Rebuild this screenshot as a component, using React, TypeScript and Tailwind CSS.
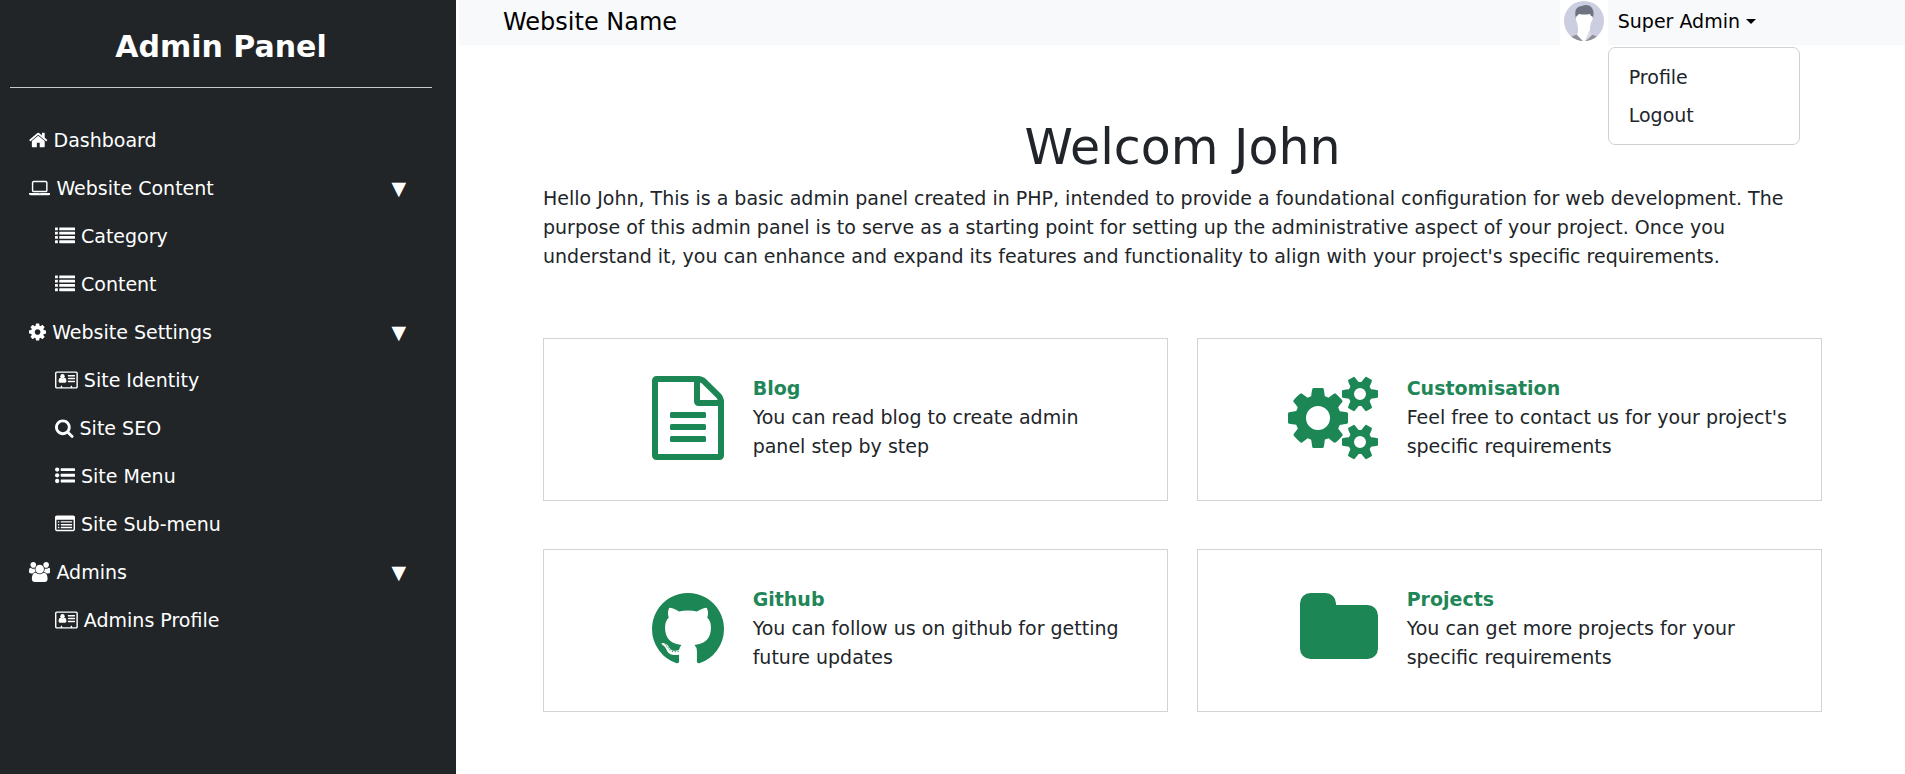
import React, { useState } from "react";

type IconProps = { className: string };

function Glyph({ viewBox, className, children }: { viewBox: string; className: string; children: React.ReactNode }) {
  return (
    <svg viewBox={viewBox} className={`${className} w-auto shrink-0`} fill="currentColor" aria-hidden="true">
      {children}
    </svg>
  );
}

function HomeIcon({ className }: IconProps) {
  return (
    <Glyph viewBox="64 0 1664 1792" className={className}>
      <path d="M1472 992v480q0 26-19 45t-45 19h-384v-384h-256v384h-384q-26 0-45-19t-19-45v-480q0-1 .5-3t.5-3l575-474 575 474q1 2 1 6zm223-69l-62 74q-8 9-21 11h-3q-13 0-21-7l-692-577-692 577q-12 8-24 7-13-2-21-11l-62-74q-8-10-7-23.5t11-21.5l719-599q32-26 76-26t76 26l244 204v-195q0-14 9-23t23-9h192q14 0 23 9t9 23v408l219 182q10 8 11 21.5t-7 23.5z" />
    </Glyph>
  );
}

function LaptopIcon({ className }: IconProps) {
  return (
    <Glyph viewBox="0 0 1920 1792" className={className}>
      <path d="M416 1280q-66 0-113-47t-47-113v-704q0-66 47-113t113-47h1088q66 0 113 47t47 113v704q0 66-47 113t-113 47h-1088zm-32-864v704q0 13 9.5 22.5t22.5 9.5h1088q13 0 22.5-9.5t9.5-22.5v-704q0-13-9.5-22.5t-22.5-9.5h-1088q-13 0-22.5 9.5t-9.5 22.5zm1376 928h160v96q0 40-47 68t-113 28h-1600q-66 0-113-28t-47-68v-96h1760zm-720 96q16 0 16-16t-16-16h-160q-16 0-16 16t16 16h160z" />
    </Glyph>
  );
}

function ListIcon({ className }: IconProps) {
  return (
    <Glyph viewBox="0 0 1792 1792" className={className}>
      {[128, 512, 896, 1280].map((y) => (
        <g key={y}>
          <rect x="0" y={y} width="256" height="256" rx="32" />
          <rect x="384" y={y} width="1408" height="256" rx="32" />
        </g>
      ))}
    </Glyph>
  );
}

function CogIcon({ className }: IconProps) {
  return (
    <Glyph viewBox="128 0 1536 1792" className={className}>
      <path d="M1152 896q0-106-75-181t-181-75-181 75-75 181 75 181 181 75 181-75 75-181zm512-109v222q0 12-8 23t-20 13l-185 28q-19 54-39 91 35 50 107 138 10 12 10 25t-9 23q-27 37-99 108t-94 71q-12 0-26-9l-138-108q-44 23-91 38-16 136-29 186-7 28-36 28h-222q-14 0-24.5-8.5t-11.5-21.5l-28-184q-49-16-90-37l-141 107q-10 9-25 9-14 0-25-11-126-114-165-168-7-10-7-23 0-12 8-23 15-21 51-66.5t54-70.5q-27-50-41-99l-183-27q-13-2-21-12.5t-8-23.5v-222q0-12 8-23t19-13l186-28q14-46 39-92-40-57-107-138-10-12-10-24 0-10 9-23 26-36 98.5-107.5t94.5-71.5q13 0 26 10l138 107q44-23 91-38 16-136 29-186 7-28 36-28h222q14 0 24.5 8.5t11.5 21.5l28 184q49 16 90 37l142-107q9-9 24-9 13 0 25 10 129 119 165 170 7 8 7 22 0 12-8 23-15 21-51 66.5t-54 70.5q26 50 41 98l183 28q13 2 21 12.5t8 23.5z" />
    </Glyph>
  );
}

function CardIcon({ className }: IconProps) {
  return (
    <Glyph viewBox="0 0 2048 1792" className={className}>
      <path d="M1024 1003q0 59-34 98t-84 39h-468q-50 0-84-39t-34-98q0-140 43-223t141-83q90 72 168 72t168-72q98 0 141 83t43 223z" />
      <circle cx="672" cy="560" r="196" />
      <rect x="1152" y="448" width="640" height="128" rx="32" />
      <rect x="1152" y="704" width="640" height="128" rx="32" />
      <rect x="1152" y="960" width="640" height="128" rx="32" />
      <path
        fillRule="evenodd"
        d="M160 128h1728q66 0 113 47t47 113v1216q0 66-47 113t-113 47h-1728q-66 0-113-47t-47-113v-1216q0-66 47-113t113-47zM160 256q-32 0-32 32v1216q0 32 32 32h352v-96q0-32 32-32h64q32 0 32 32v96h768v-96q0-32 32-32h64q32 0 32 32v96h352q32 0 32-32v-1216q0-32-32-32z"
      />
    </Glyph>
  );
}

function SearchIcon({ className }: IconProps) {
  return (
    <Glyph viewBox="64 0 1664 1792" className={className}>
      <path d="M1216 832q0-185-131.5-316.5t-316.5-131.5-316.5 131.5-131.5 316.5 131.5 316.5 316.5 131.5 316.5-131.5 131.5-316.5zm512 832q0 52-38 90t-90 38q-54 0-90-38l-343-342q-179 124-399 124-143 0-273.5-55.5t-225-150-150-225-55.5-273.5 55.5-273.5 150-225 225-150 273.5-55.5 273.5 55.5 225 150 150 225 55.5 273.5q0 220-124 399l343 343q37 37 37 90z" />
    </Glyph>
  );
}

function BulletsIcon({ className }: IconProps) {
  return (
    <Glyph viewBox="0 0 1792 1792" className={className}>
      {[320, 832, 1344].map((cy) => (
        <g key={cy}>
          <circle cx="192" cy={cy} r="192" />
          <rect x="512" y={cy - 128} width="1280" height="256" rx="32" />
        </g>
      ))}
    </Glyph>
  );
}

function ListPanelIcon({ className }: IconProps) {
  return (
    <Glyph viewBox="0 0 1792 1792" className={className}>
      <path
        fillRule="evenodd"
        d="M160 128h1472q66 0 113 47t47 113v1088q0 66-47 113t-113 47h-1472q-66 0-113-47t-47-113v-1088q0-66 47-113t113-47zM160 512q-32 0-32 32v832q0 32 32 32h1472q32 0 32-32v-832q0-32-32-32z"
      />
      {[640, 896, 1152].map((y) => (
        <g key={y}>
          <rect x="256" y={y} width="128" height="128" rx="32" />
          <rect x="512" y={y} width="1024" height="128" rx="32" />
        </g>
      ))}
    </Glyph>
  );
}

function UsersIcon({ className }: IconProps) {
  return (
    <Glyph viewBox="0 0 1920 1792" className={className}>
      <path d="M593 896q-162 5-265 128h-134q-82 0-138-40.5t-56-118.5q0-353 124-353 6 0 43.5 21t97.5 42.5 119 21.5q67 0 133-23-5 37-5 66 0 139 81 256zm1071 637q0 120-73 189.5t-194 69.5h-874q-121 0-194-69.5t-73-189.5q0-53 3.5-103.5t14-109 26.5-108.5 43-97.5 62-81 85.5-53.5 111.5-20q10 0 43 21.5t73 48 107 48 135 21.5 135-21.5 107-48 73-48 43-21.5q61 0 111.5 20t85.5 53.5 62 81 43 97.5 26.5 108.5 14 109 3.5 103.5zm-1024-1277q0 106-75 181t-181 75-181-75-75-181 75-181 181-75 181 75 75 181zm704 384q0 159-112.5 271.5t-271.5 112.5-271.5-112.5-112.5-271.5 112.5-271.5 271.5-112.5 271.5 112.5 112.5 271.5zm576 225q0 78-56 118.5t-138 40.5h-134q-103-123-265-128 81-117 81-256 0-29-5-66 66 23 133 23 59 0 119-21.5t97.5-42.5 43.5-21q124 0 124 353zm-128-609q0 106-75 181t-181 75-181-75-75-181 75-181 181-75 181 75 75 181z" />
    </Glyph>
  );
}

function FileIcon({ className }: IconProps) {
  return (
    <Glyph viewBox="128 0 1536 1792" className={className}>
      <path d="M1596 380q28 28 48 76t20 88v1152q0 40-28 68t-68 28h-1344q-40 0-68-28t-28-68v-1600q0-40 28-68t68-28h896q40 0 88 20t76 48zm-444-244v376h376q-10-29-22-41l-313-313q-12-12-41-22zm384 1528v-1024h-416q-40 0-68-28t-28-68v-416h-768v1536h1280z" />
      <rect x="512" y="768" width="768" height="128" rx="32" />
      <rect x="512" y="1024" width="768" height="128" rx="32" />
      <rect x="512" y="1280" width="768" height="128" rx="32" />
    </Glyph>
  );
}

function CogsIcon({ className }: IconProps) {
  const smallCog =
    "v140q0 16-149 31-12 27-30 52 51 113 51 138 0 4-4 7-122 71-124 71-8 0-46-47t-52-68q-20 2-30 2t-30-2q-14 21-52 68t-46 47q-2 0-124-71-4-3-4-7 0-25 51-138-18-25-30-52-149-15-149-31v-140q0-16 149-31 13-29 30-52-51-113-51-138 0-4 4-7 4-2 35-20t59-34 30-16q8 0 46 46.5t52 67.5q20-2 30-2t30 2q51-71 92-112l6-2q4 0 124 70 4 3 4 7 0 25-51 138 17 23 30 52 149 15 149 31z";
  return (
    <Glyph viewBox="0 0 1920 1792" className={className}>
      <path d="M896 896q0-106-75-181t-181-75-181 75-75 181 75 181 181 75 181-75 75-181zm384-91v185q0 10-7 19.5t-16 10.5l-155 24q-11 35-32 76 34 48 90 115 7 11 7 20 0 12-7 19-23 30-82.5 89.5t-78.5 59.5q-11 0-21-7l-115-90q-37 19-77 31-11 108-23 155-7 24-30 24h-186q-11 0-20-7.5t-10-17.5l-23-153q-34-10-75-31l-118 89q-7 7-20 7-11 0-21-8-144-133-144-160 0-9 7-19 10-14 41-53t47-61q-23-44-35-82l-152-24q-10-1-17-9.5t-7-19.5v-185q0-10 7-19.5t16-10.5l155-24q11-35 32-76-34-48-90-115-7-11-7-20 0-12 7-20 22-30 82-89t79-59q11 0 21 7l115 90q34-18 77-32 11-108 23-154 7-24 30-24h186q11 0 20 7.5t10 17.5l23 153q34 10 75 31l118-89q8-7 20-7 11 0 21 8 144 133 144 160 0 8-7 19-12 16-42 54t-45 60q23 48 34 82l152 23q10 2 17 10.5t7 19.5z" />
      <path
        fillRule="evenodd"
        d={`M1664 1408q0-52-38-90t-90-38-90 38-38 90q0 53 37.5 90.5t90.5 37.5 90.5-37.5 37.5-90.5zM1920 1338${smallCog}`}
      />
      <path
        fillRule="evenodd"
        d={`M1664 384q0-52-38-90t-90-38-90 38-38 90q0 53 37.5 90.5t90.5 37.5 90.5-37.5 37.5-90.5zM1920 314${smallCog}`}
      />
    </Glyph>
  );
}

function GithubIcon({ className }: IconProps) {
  return (
    <Glyph viewBox="128 0 1536 1792" className={className}>
      <path d="M896 128q209 0 385.5 103t279.5 279.5 103 385.5q0 251-146.5 451.5t-378.5 277.5q-27 5-40-7t-13-30q0-3 .5-76.5t.5-134.5q0-97-52-142 57-6 102.5-18t94-39 81-66.5 53-105 20.5-150.5q0-119-79-206 37-91-8-204-28-9-81 11t-92 44l-38 24q-93-26-192-26t-192 26q-16-11-42.5-27t-83.5-38.5-85-13.5q-45 113-8 204-79 87-79 206 0 85 20.5 150t52.5 105 80.5 67 94 39 102.5 18q-39 36-49 103-21 10-45 15t-57 5-65.5-21.5-55.5-62.5q-19-32-48.5-52t-49.5-24l-20-3q-21 0-29 4.5t-5 11.5 9 14 13 12l7 5q22 10 43.5 38t31.5 51l10 23q13 38 44 61.5t67 30 69.5 7 55.5-3.5l23-4q0 38 .5 88.5t.5 54.5q0 18-13 30t-40 7q-232-77-378.5-277.5t-146.5-451.5q0-209 103-385.5t279.5-279.5 385.5-103zm-477 1103q3-7-7-12-10-3-13 2-3 7 7 12 9 6 13-2zm31 34q7-5-2-16-10-9-16-3-7 5 2 16 10 10 16 3zm30 45q9-7 0-19-8-13-17-6-9 5 0 18t17 7zm42 42q8-8-4-19-12-12-20-3-9 8 4 19 12 12 20 3zm57 25q3-11-13-16-15-4-19 7t13 15q15 6 19-6zm63 5q0-13-17-11-16 0-16 11 0 13 17 11 16 0 16-11zm58-10q-2-11-18-9-16 3-14 15t18 8 14-14z" />
    </Glyph>
  );
}

function FolderIcon({ className }: IconProps) {
  return (
    <Glyph viewBox="64 0 1664 1792" className={className}>
      <path d="M1728 608v704q0 92-66 158t-158 66h-1216q-92 0-158-66t-66-158v-960q0-92 66-158t158-66h320q92 0 158 66t66 158v32h672q92 0 158 66t66 158z" />
    </Glyph>
  );
}

function Avatar() {
  return (
    <svg viewBox="0 0 40 40" className="size-10" role="img" aria-label="Profile picture">
      <defs>
        <clipPath id="avatar-clip">
          <circle cx="20" cy="20" r="20" />
        </clipPath>
      </defs>
      <g clipPath="url(#avatar-clip)">
        <rect width="40" height="40" fill="#cbcde0" />
        <path d="M6 36q5-2 9-3l5 7 5-7q5 1 9 3v6H6z" fill="#8f9097" />
        <path d="M14 25h12v6l1 3-6 6h-2l-6-6 1-3z" fill="#fff" />
        <path d="M25 29l3 5-4 4-3 2z" fill="#d9dae6" />
        <path d="M12 18q-2-8 1-11 2-2 5-2 4-2 8 0 5 3 3 13z" fill="#6f7280" />
        <path d="M12 17q0-2 1-2l2-2q5 1 11 0l1 2q2 0 2 2-1 4-2 4 0 4-2 7-1 8-5 11-4-3-5-11-2-3-2-7-1 0-1-4z" fill="#fff" />
      </g>
    </svg>
  );
}

type Item = { label: string; icon: (p: IconProps) => React.ReactElement };
type Section = Item & { children?: Item[] };

const menu: Section[] = [
  { label: "Dashboard", icon: HomeIcon },
  {
    label: "Website Content",
    icon: LaptopIcon,
    children: [
      { label: "Category", icon: ListIcon },
      { label: "Content", icon: ListIcon },
    ],
  },
  {
    label: "Website Settings",
    icon: CogIcon,
    children: [
      { label: "Site Identity", icon: CardIcon },
      { label: "Site SEO", icon: SearchIcon },
      { label: "Site Menu", icon: BulletsIcon },
      { label: "Site Sub-menu", icon: ListPanelIcon },
    ],
  },
  { label: "Admins", icon: UsersIcon, children: [{ label: "Admins Profile", icon: CardIcon }] },
];

const cards: (Item & { text: string })[] = [
  { label: "Blog", icon: FileIcon, text: "You can read blog to create admin panel step by step" },
  { label: "Customisation", icon: CogsIcon, text: "Feel free to contact us for your project's specific requirements" },
  { label: "Github", icon: GithubIcon, text: "You can follow us on github for getting future updates" },
  { label: "Projects", icon: FolderIcon, text: "You can get more projects for your specific requirements" },
];

function MenuSection({ section }: { section: Section }) {
  const [open, setOpen] = useState(true);
  const Icon = section.icon;
  if (!section.children) {
    return (
      <li>
        <a href="#" className="flex h-12 items-center gap-1.5 pl-[29px]">
          <Icon className="h-5" />
          {section.label}
        </a>
      </li>
    );
  }
  return (
    <li>
      <button
        type="button"
        aria-expanded={open}
        onClick={() => setOpen(!open)}
        className="flex h-12 w-full items-center gap-1.5 pr-[50px] pl-[29px]"
      >
        <Icon className="h-5" />
        {section.label}
        <span className="ml-auto">▼</span>
      </button>
      {open && (
        <ul>
          {section.children.map(({ label, icon: SubIcon }) => (
            <li key={label}>
              <a href="#" className="flex h-12 items-center gap-1.5 pl-[55px]">
                <SubIcon className="h-5" />
                {label}
              </a>
            </li>
          ))}
        </ul>
      )}
    </li>
  );
}

function UserMenu() {
  const [open, setOpen] = useState(true);
  return (
    <div className="flex">
      <div className="flex h-[45px] w-12 justify-center bg-white pt-px">
        <Avatar />
      </div>
      <div className="relative">
        <button
          type="button"
          aria-expanded={open}
          onClick={() => setOpen(!open)}
          className="flex h-[42px] items-center gap-1.5 px-2.5"
        >
          Super Admin
          <svg viewBox="0 0 10 5" className="h-[5px] w-2.5" fill="currentColor" aria-hidden="true">
            <path d="M0 0h10l-5 5z" />
          </svg>
        </button>
        {open && (
          <ul className="absolute top-full left-0 mt-0.5 w-48 rounded-[7px] border border-[#cfd1d3] bg-white py-2.5 text-[#212529]">
            {["Profile", "Logout"].map((label) => (
              <li key={label}>
                <a href="#" className="flex h-[38px] items-center px-5">
                  {label}
                </a>
              </li>
            ))}
          </ul>
        )}
      </div>
    </div>
  );
}

export default function App() {
  return (
    <div className="flex min-h-screen bg-white font-['DejaVu_Sans',Verdana,sans-serif] text-[19px] leading-[29px] text-[#212529]">
      <aside className="w-[456px] shrink-0 bg-[#212528] text-white">
        <div className="mr-6 ml-2.5 border-b border-[#c7c8c9] pt-[29px] pb-[22px] text-center">
          <h2 className="text-[30px] leading-9 font-bold">Admin Panel</h2>
        </div>
        <nav aria-label="Admin" className="pt-7">
          <ul>
            {menu.map((section) => (
              <MenuSection key={section.label} section={section} />
            ))}
          </ul>
        </nav>
      </aside>

      <div className="ml-[3px] min-w-0 flex-1">
        <header className="flex h-[45px] items-start justify-between bg-[#f8f9fb] pr-[139px] pl-11 text-black">
          <a href="#" className="text-[24px] leading-[44px]">
            Website Name
          </a>
          <UserMenu />
        </header>

        <main className="pt-[74px] pr-[83px] pb-12 pl-[84px]">
          <h1 className="text-center text-[49px] leading-[58px]">Welcom John</h1>
          <p className="pt-[7px]">
            Hello John, This is a basic admin panel created in PHP, intended to provide a foundational configuration
            for web development. The purpose of this admin panel is to serve as a starting point for setting up the
            administrative aspect of your project. Once you understand it, you can enhance and expand its features and
            functionality to align with your project's specific requirements.
          </p>

          <div className="mt-[67px] grid grid-cols-2 gap-x-[29px] gap-y-12">
            {cards.map(({ label, icon: Icon, text }) => (
              <section key={label} className="flex items-center border border-[#d2d3d5] pt-[35px] pb-[39px]">
                <div className="flex w-1/3 shrink-0 justify-end pr-7 text-[#1c8755]">
                  <Icon className="h-[84px]" />
                </div>
                <div className="min-w-0 pr-[30px] pl-px">
                  <h3 className="font-bold text-[#1f8657]">{label}</h3>
                  <p>{text}</p>
                </div>
              </section>
            ))}
          </div>
        </main>
      </div>
    </div>
  );
}
